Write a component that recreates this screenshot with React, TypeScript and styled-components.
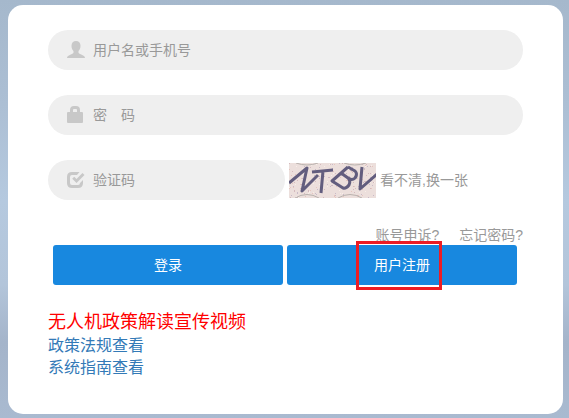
import React from "react";
import styled, { createGlobalStyle } from "styled-components";

const GlobalStyle = createGlobalStyle`
  *, *::before, *::after { box-sizing: border-box; }
  body { margin: 0; }
  body, input, button {
    font-family: "Liberation Sans", "Noto Sans CJK SC", sans-serif;
    font-size: 14px;
    line-height: 20px;
  }
`;

const Page = styled.main`
  min-height: 100vh;
  padding: 5px 6px 4px 8px;
  display: flex;
  background: linear-gradient(180deg, #a5b8cc 0%, #acbfd4 25%, #b5c9df 48%, #b3c5da 68%, #a4b4ca 82%, #a9bad0 100%);
`;

const Card = styled.form`
  flex: 1;
  display: flex;
  flex-direction: column;
  padding: 25px 40px;
  border-radius: 15px;
  background: #fff;
`;

const Fields = styled.div`
  display: flex;
  flex-direction: column;
  gap: 25px;
`;

const Field = styled.label`
  flex: 1;
  min-width: 0;
  height: 40px;
  display: flex;
  align-items: center;
  gap: 8px;
  padding: 0 20px 0 19px;
  border-radius: 20px;
  background: #efefef;
`;

const Icon = styled.svg`
  flex: none;
  width: 18px;
  height: 18px;
  fill: #c8c8c8;
`;

const Input = styled.input`
  flex: 1;
  min-width: 0;
  height: 40px;
  padding: 0;
  border: 0;
  outline: 0;
  background: transparent;
  color: #555;
  &::placeholder { color: #999; opacity: 1; }
`;

const FieldLine = styled.div`
  display: flex;
`;

const CaptchaRow = styled.div`
  display: grid;
  grid-template-columns: 237fr 238fr;
  align-items: center;
`;

const CaptchaSide = styled.div`
  display: flex;
  align-items: center;
  gap: 4px;
  padding-left: 4px;
`;

const CaptchaImage = styled.svg`
  flex: none;
  width: 87px;
  height: 35px;
`;

const TextLink = styled.a`
  color: #999;
  text-decoration: none;
  white-space: nowrap;
`;

const HelpLinks = styled.nav`
  display: flex;
  justify-content: flex-end;
  gap: 20px;
  margin-top: 25px;
`;

const Actions = styled.div`
  display: grid;
  grid-template-columns: 1fr 1fr;
  gap: 4px;
  padding: 0 6px 0 5px;
`;

const Button = styled.button`
  position: relative;
  height: 40px;
  padding: 0;
  border: 0;
  border-radius: 3px;
  background: #1888df;
  color: #fff;
  cursor: pointer;
`;

const Highlight = styled.span`
  position: absolute;
  top: -4px;
  bottom: -5px;
  left: 50%;
  width: 86px;
  margin-left: -46px;
  border: 3px solid #ed1c24;
  pointer-events: none;
`;

const Resources = styled.nav`
  display: flex;
  flex-direction: column;
  align-items: flex-start;
  margin-top: 24px;
`;

const ResourceLink = styled.a<{ $featured?: boolean }>`
  color: ${(p) => (p.$featured ? "#f00" : "#337ab7")};
  font-size: ${(p) => (p.$featured ? 18 : 16)}px;
  line-height: ${(p) => (p.$featured ? 26 : 22)}px;
  text-decoration: none;
`;

const speckles = Array.from({ length: 210 }, (_, i) => ({
  x: (i * 37 + ((i * i) % 23)) % 87,
  y: (i * 17 + ((i * i) % 13)) % 35,
  color: ["#d4b9bd", "#f8eee8", "#c9bac8", "#e6c5be"][i % 4],
}));

function Captcha() {
  return (
    <CaptchaImage viewBox="0 0 87 35" role="img" aria-label="验证码图片">
      <rect width="87" height="35" fill="#ecdfdc" />
      {speckles.map((s, i) => (
        <rect key={i} x={s.x} y={s.y} width="1" height="1" fill={s.color} />
      ))}
      <g fill="none" stroke="#b9b2ae">
        <path d="M6 35Q18 28 30 35M49 35Q61 28 73 35M7 0Q18 4 29 0M55 0Q66 4 77 0" />
      </g>
      <g fill="none" stroke="#625d7e" strokeWidth="3" strokeLinejoin="round">
        <path d="M0 20L18 5L13 28L29 12" />
        <path d="M23 9L44 7M34 8L32 30" />
        <path d="M59 4L43 18L54 25Q57 26 60 22Q62 18 59 15L52 10M59 4L66 8Q69 11 66 15Q63 18 59 15" />
        <path d="M73 4L71 26L88 11" />
      </g>
    </CaptchaImage>
  );
}

export default function App() {
  return (
    <>
      <GlobalStyle />
      <Page>
        <Card onSubmit={(e) => e.preventDefault()}>
          <Fields>
            <FieldLine>
              <Field>
                <Icon viewBox="0 0 18 18" aria-hidden="true">
                  <path d="M9 0C6.2 0 4.5 1.8 4.5 4.7C4.5 7 5.2 8.9 6.5 10V11.5C6.5 12.4 5.5 12.8 3.8 13.5C1.7 14.4 0 15.2 0 17H18C18 15.2 16.3 14.4 14.2 13.5C12.5 12.8 11.5 12.4 11.5 11.5V10C12.8 8.9 13.5 7 13.5 4.7C13.5 1.8 11.8 0 9 0Z" />
                </Icon>
                <Input aria-label="用户名或手机号" placeholder="用户名或手机号" />
              </Field>
            </FieldLine>
            <FieldLine>
              <Field>
                <Icon viewBox="0 0 18 18" aria-hidden="true">
                  <path fillRule="evenodd" d="M3 6V4Q3 0 7 0H9Q13 0 13 4V6H15Q16 6 16 7V16Q16 17 15 17H1Q0 17 0 16V7Q0 6 1 6ZM6 6H10V4Q10 3 9 3H7Q6 3 6 4Z" />
                </Icon>
                <Input type="password" aria-label="密码" placeholder="密　码" />
              </Field>
            </FieldLine>
            <CaptchaRow>
              <Field>
                <Icon viewBox="0 0 18 18" aria-hidden="true">
                  <path d="M12.5 1H5Q0 1 0 6V12Q0 17 5 17H11Q16 17 16 12V9L13 12Q13 14 11 14H5Q3 14 3 12V6Q3 4 5 4H10Z" />
                  <path d="M15.5 2L17.5 4L9.5 12L5.2 7.8L7.2 5.8L9.5 8Z" />
                </Icon>
                <Input aria-label="验证码" placeholder="验证码" />
              </Field>
              <CaptchaSide>
                <Captcha />
                <TextLink href="#refresh">看不清,换一张</TextLink>
              </CaptchaSide>
            </CaptchaRow>
          </Fields>
          <HelpLinks>
            <TextLink href="#appeal">账号申诉?</TextLink>
            <TextLink href="#forgot">忘记密码?</TextLink>
          </HelpLinks>
          <Actions>
            <Button type="submit">登录</Button>
            <Button type="button">
              用户注册
              <Highlight />
            </Button>
          </Actions>
          <Resources>
            <ResourceLink href="#video" $featured>无人机政策解读宣传视频</ResourceLink>
            <ResourceLink href="#policy">政策法规查看</ResourceLink>
            <ResourceLink href="#guide">系统指南查看</ResourceLink>
          </Resources>
        </Card>
      </Page>
    </>
  );
}
